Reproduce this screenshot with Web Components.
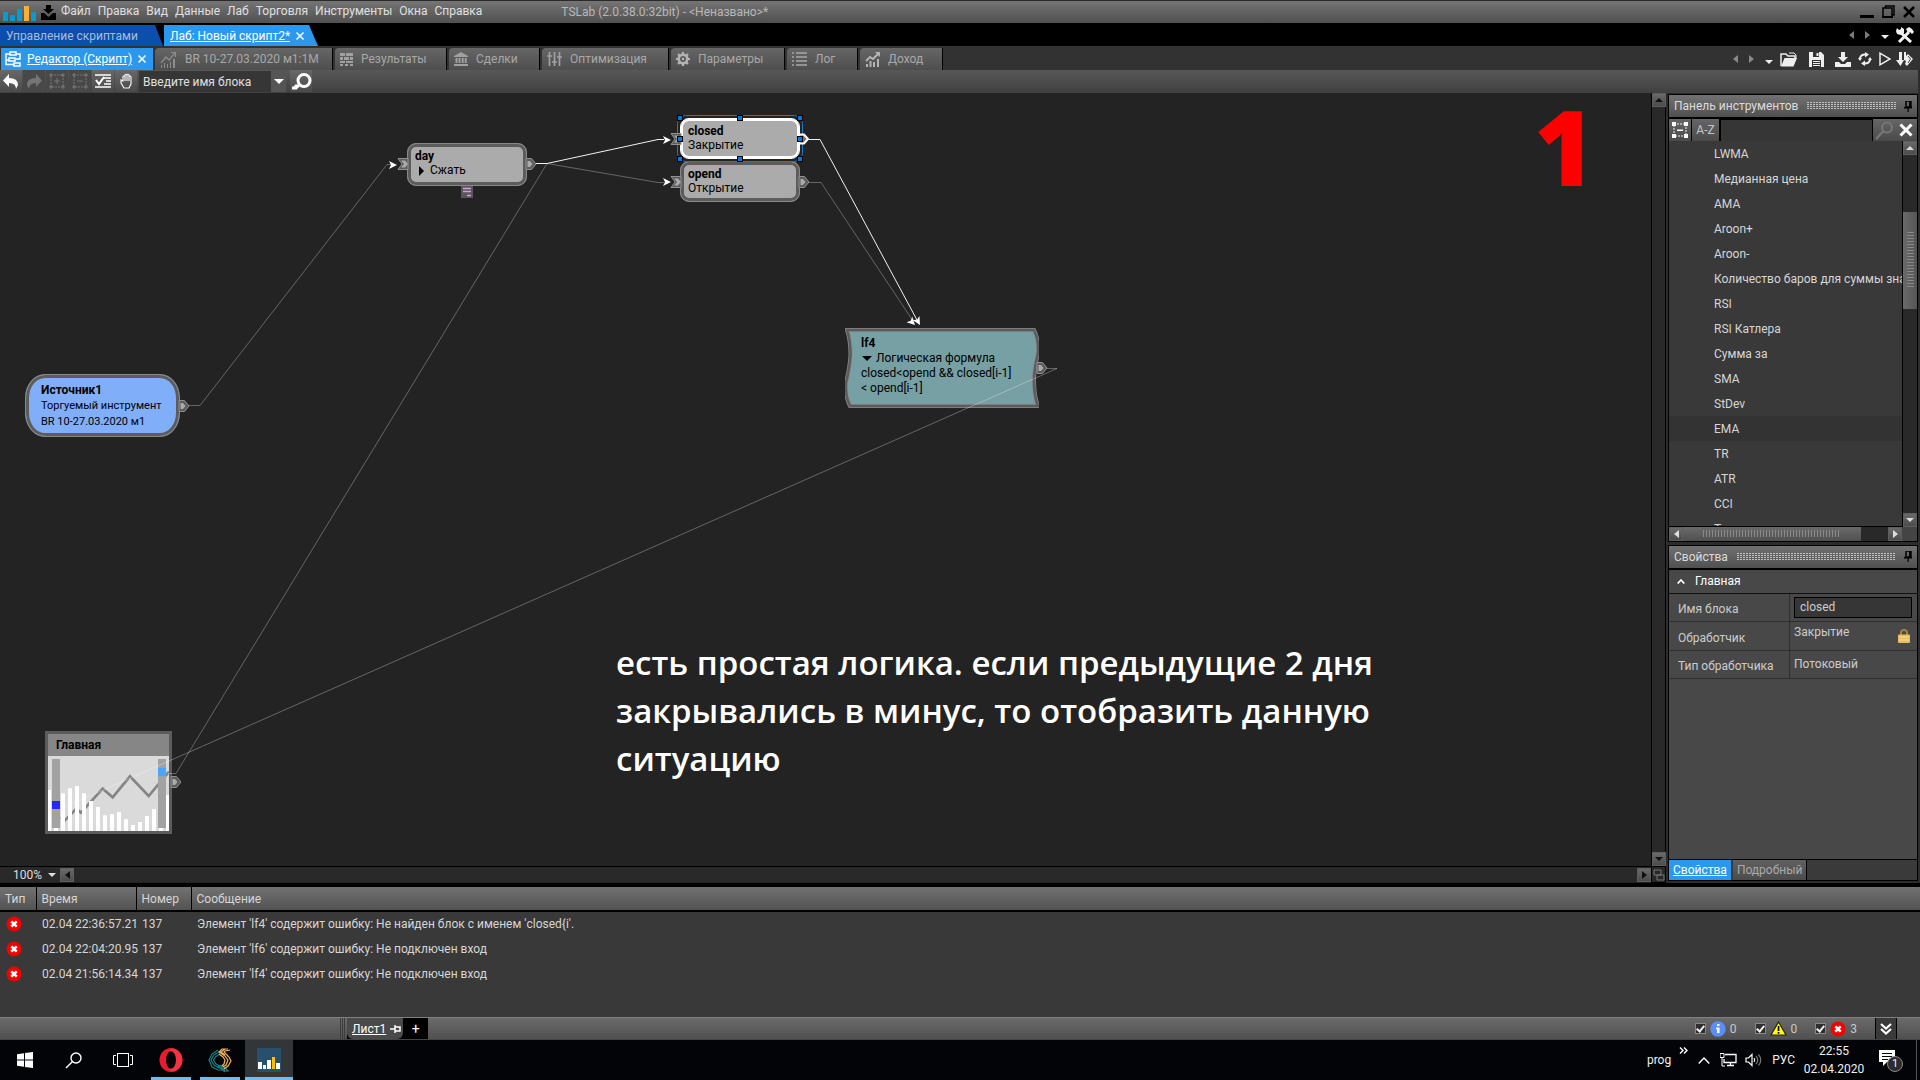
<!DOCTYPE html>
<html lang="ru">
<head>
<meta charset="utf-8">
<title>TSLab (2.0.38.0:32bit)</title>
<style>
html,body{margin:0;height:100%;background:#000;overflow:hidden}
body{font:12px/16px Roboto,"Open Sans",sans-serif;color:#d6d6d6}
</style>
</head>
<body>
<ts-app></ts-app>
<script>
const BASE = `
*{box-sizing:border-box}
button,input,select{font:inherit;color:inherit;background:none;border:0;margin:0;padding:0;border-radius:0;outline:0}
button{display:flex;align-items:center;white-space:nowrap}
`;
function define(name, css, html, setup) {
  const tpl = document.createElement('template');
  tpl.innerHTML = `<style>${BASE}${css}</style>${html}`;
  customElements.define(name, class extends HTMLElement {
    constructor() {
      super();
      this.attachShadow({mode: 'open'}).append(tpl.content.cloneNode(true));
    }
    connectedCallback() { if (setup) setup(this, this.shadowRoot); }
  });
}

/* name: [width, height, markup] */
const ICONS = {
  logo: [33, 19, '<g fill="#0a9ad0"><path d="M0 9h5v9H0zM7 12h5v6H7zM14 6h5v12h-5zM28 9h5v9h-5z"/></g><path fill="#fbb034" d="M21 3h5v15h-5z"/>'],
  inbox: [15, 15, '<path d="M5 0h5v4h3L7.500 9 2 4h3zM0 8h3l4.500 4L12 8h3v7H0z" fill="#000"/>'],
  min: [14, 14, '<path d="M0 10h14v3H0z" fill="#000"/>'],
  restore: [13, 14, '<path d="M3.500 3V1h8.500v9H10M1 3h9v9H1z" fill="none" stroke="#000" stroke-width="1.500"/><path d="M0 11h11v2H0z"/>'],
  close: [12, 12, '<path d="M1 1l10 10M11 1L1 11" stroke="#000" stroke-width="2.500"/>'],
  x: [8, 8, '<path d="M.5.5l7 7M7.500.5l-7 7" stroke="#e4f2ff" stroke-width="1.600"/>'],
  bigx: [14, 14, '<path d="M1.500 1.500l11 11M12.500 1.500l-11 11" stroke="#fff" stroke-width="3"/>'],
  left: [5, 8, '<path d="M5 0v8L0 4z" fill="currentColor"/>'],
  right: [5, 8, '<path d="M0 0v8l5-4z" fill="currentColor"/>'],
  down: [8, 4, '<path d="M0 0h8L4 4z" fill="currentColor"/>'],
  up: [8, 4, '<path d="M0 4h8L4 0z" fill="currentColor"/>'],
  bdown: [10, 5, '<path d="M0 0h10L5 5z" fill="currentColor"/>'],
  tools: [18, 16, '<path d="M4 5l11 10M13 5L3 15" stroke="#f2f2f2" stroke-width="3"/><path d="M0 4l1-3 2 2 2-1V0l3 2v4L5 8 1 7zM10 2l3-2 3 2 2 3-2 2-2-2-2 1z" fill="#f2f2f2"/>'],
  folder: [18, 15, '<path d="M1 14V2h5l2 2h7v3" fill="none" stroke="#eee" stroke-width="1.500"/><path d="M9 1h5l2 2v3" fill="none" stroke="#eee"/><path d="M1 14.500L4.500 6H17l-3.500 8.500z" fill="#eee"/>'],
  save: [15, 15, '<path d="M0 0h12l3 3v12H0z" fill="#eee"/><path d="M4 0h6v5H4zM3 8h9v7H3z" fill="#333"/><path d="M7.500 1h2v3h-2zM4 9h7v1H4zM4 11h7v1H4zM4 13h7v1H4z" fill="#eee"/>'],
  download: [16, 15, '<path d="M6 0h4v5h3l-5 5-5-5h3z" fill="#eee"/><path d="M0 10h4l2 2h4l2-2h4v5H0z" fill="#eee"/>'],
  refresh: [14, 14, '<path d="M2 8V6q1-3.500 5-3.500M12 6v2q-1 3.500-5 3.500" fill="none" stroke="#eee" stroke-width="2"/><path d="M7 0l4 2.500L7 5.500zM7 8.500v5.500l-4-2.500zM0 6h4L2 9zM10 8h4l-2-3z" fill="#eee"/>'],
  play: [12, 14, '<path d="M1 1.200v11.600L11 7z" fill="none" stroke="#eee" stroke-width="1.500"/>'],
  step: [17, 15, '<path d="M3 0h3v8h2l-3.500 6L0 8h3z" fill="#eee"/><path d="M8 0h2v4l2-2 5 5-6 7-2-2 1-3-2-1z" fill="#eee"/><path d="M12 4l2.500 3L12 11" stroke="#444" fill="none"/>'],
  flow: [16, 16, '<path d="M5 3H1v5M11 3h4v5h-4M4 9H1v4.500h8" fill="none" stroke="#fff" stroke-width="1.500"/><path d="M5 1h6v3H5zM4 7h6v3H4zM9 12h6v3H9z" fill="#2b96ea" stroke="#fff" stroke-width="1.500"/>'],
  chart: [17, 17, '<path d="M1 12l5-6 3 3 6-7M11 1.500h4.500V6" fill="none" stroke="#8d8d8d" stroke-width="1.200"/><path d="M1 14h1v3H1zM4 12h1v5H4zM7 13h1v4H7zM10 11h1v6h-1zM13 8h2v9h-2z" fill="#8d8d8d"/>'],
  results: [13, 13, '<g fill="#a0a0a0"><path d="M0 0h5v3H0zM6 0h7v3H6zM0 4h3v3H0zM4 4h5v3H4zM10 4h3v3h-3zM0 8h5v2H0zM6 8h7v2H6zM0 11h3v2H0zM5 11h3v2H5zM10 11h3v2h-3z"/></g>'],
  bank: [14, 14, '<path d="M7 0l7 4v1H0V4zM1.500 6h2v5h-2zM4.500 6h2v5h-2zM7.700 6h2v5h-2zM10.700 6h2v5h-2zM0 12h14v2H0z" fill="#a0a0a0"/>'],
  sliders: [15, 14, '<path d="M2.500 0v14M7.500 0v14M12.500 0v14M0 4h5M5 10h5M10 5h5" stroke="#a0a0a0" stroke-width="1.700"/>'],
  gear: [14, 14, '<circle cx="7" cy="7" r="4.300" fill="none" stroke="#b4b4b4" stroke-width="2.600"/><path d="M7 0v3M7 11v3M0 7h3M11 7h3M2 2l2 2M10 10l2 2M12 2l-2 2M4 10l-2 2" stroke="#b4b4b4" stroke-width="2.200"/><circle cx="7" cy="7" r="1.300" fill="#b4b4b4"/>'],
  list: [15, 14, '<path d="M0 1h2M0 5h2M0 9h2M0 13h2M4 1h11M4 5h11M4 9h11M4 13h11" stroke="#a8a8a8" stroke-width="1.700"/>'],
  income: [15, 15, '<path d="M1 9l4-4 3 2 5-5" fill="none" stroke="#b4b4b4" stroke-width="2"/><path d="M10 0h5v5zM1 12h2v3H1zM4.500 9h2v6h-2zM8 10h2v5H8zM12 7h2v8h-2z" fill="#b4b4b4"/>'],
  undo: [16, 15, '<path d="M6 0v4q9 0 9 7l-2 4q0-6-7-6v4L0 6.500z" fill="#fff"/>'],
  redo: [16, 15, '<path d="M10 0v4Q1 4 1 11l2 4q0-6 7-6v4l6-6.500z" fill="#757575"/>'],
  group: [16, 16, '<rect x="2" y="2" width="12" height="12" fill="none" stroke="#777" stroke-dasharray="2 1"/><path d="M5 8h6M8 5v6M0 2h4M2 0v4M12 2h4M14 0v4M0 14h4M2 12v4M12 14h4M14 12v4" stroke="#777"/>'],
  ungroup: [16, 16, '<rect x="2" y="2" width="12" height="12" fill="none" stroke="#777" stroke-dasharray="2 1"/><path d="M5 8h6M0 2h4M2 0v4M12 2h4M14 0v4M0 14h4M2 12v4M12 14h4M14 12v4" stroke="#777"/>'],
  checklist: [16, 14, '<path d="M0 1h16M9 4h7M11 7h5M9 10h7M0 13h16" stroke="#fff" stroke-width="1.300"/><path d="M1 6l3 4 5-7" fill="none" stroke="#fff" stroke-width="2"/>'],
  hand: [13, 16, '<path d="M4 15L1 10V7l2 1V3.500q1-1.500 2 0V2q1-1.500 2 0v0q1-1.500 2 0v1.500q1-1 2 .5V11l-2 4zM5 3.500V8M7 2v6M9 2.500V8" fill="none" stroke="#f4f4f4" stroke-width="1.200"/>'],
  lens: [21, 17, '<circle cx="13" cy="7.500" r="6" fill="none" stroke="#fff" stroke-width="3"/><path d="M9 11l-4 4H1M4 12l3 3" stroke="#fff" stroke-width="3" fill="none"/>'],
  frame: [16, 16, '<rect x="2" y="2" width="12" height="12" fill="none" stroke="#eee" stroke-dasharray="2 1"/><path d="M0 0h4v4H0zM12 0h4v4h-4zM0 12h4v4H0zM12 12h4v4h-4zM5 7.500h6v1.500H5z" fill="#fff"/>'],
  find: [19, 19, '<circle cx="12" cy="6.500" r="5" fill="none" stroke="#777" stroke-width="2"/><path d="M8.500 10L1 18" stroke="#777" stroke-width="2.500"/>'],
  pin: [8, 11, '<path d="M2 0h5v6H2z" fill="none" stroke="#000" stroke-width="1.500"/><path d="M0 6h8v1.500H0zM3.500 7h1.200v4H3.500zM5 0h2v6H5z"/>'],
  sidepin: [11, 8, '<path d="M0 4h5M5 0v8M5 2h5v4H5" fill="none" stroke="#fff" stroke-width="1.500"/>'],
  chev: [8, 5, '<path d="M.7 4.500L4 1l3.300 3.500" fill="none" stroke="#fff" stroke-width="1.700"/>'],
  lock: [12, 14, '<path d="M3 7V4q0-3 3-3t3 3v3" fill="none" stroke="#a8803a" stroke-width="2"/><rect y="5.500" width="12" height="8.500" rx="1" fill="#e8bf5c"/><path d="M1 8h10M1 11h10" stroke="#f8e29a"/>'],
  corner: [12, 12, '<path d="M1 1h7v5H1zM4 6h7v5H4z" fill="none" stroke="#777"/>'],
  error: [16, 16, '<circle cx="8" cy="8" r="7.500" fill="#f80000"/><path d="M5.300 5.300l5.400 5.400M10.700 5.300l-5.400 5.400" stroke="#fff" stroke-width="2.600"/>'],
  info: [16, 16, '<circle cx="8" cy="8" r="7.700" fill="#5a8ffb"/><path d="M7 3h2.500v2H7zM6 6.500h3.500V12H7V8H6z" fill="#fff"/>'],
  warn: [17, 15, '<path d="M8.500 1L16 14H1z" fill="#ff0" stroke="#222" stroke-width="1.200"/><path d="M7.700 5h1.700v5H7.700zM7.700 11h1.700v1.700H7.700z"/>'],
  dbldown: [12, 12, '<path d="M1 1l5 4.500L11 1M1 6l5 4.500L11 6" fill="none" stroke="#fff" stroke-width="2.200"/>'],
  win: [16, 16, '<path d="M0 2.300L7 1.300v6.200H0zM8 1.100L16 0v7.500H8zM0 8.500h7v6.200L0 13.700zM8 8.500h8V16l-8-1.100z" fill="#fff"/>'],
  search: [17, 17, '<circle cx="11" cy="6" r="5" fill="none" stroke="#fff" stroke-width="1.400"/><path d="M7.500 9.500L1 16" stroke="#fff" stroke-width="1.500"/>'],
  taskview: [20, 14, '<rect x="4.500" y=".5" width="11" height="13" fill="none" stroke="#fff"/><path d="M3 2.500H.5v9H3M17 2.500h2.500v9H17" fill="none" stroke="#fff"/>'],
  opera: [24, 24, '<path fill-rule="evenodd" d="M12 0a11.500 12 0 1 0 0 24a11.500 12 0 1 0 0-24zM12 3a5 9 0 1 1 0 18a5 9 0 1 1 0-18z" fill="#e81c2e"/><path d="M14 .2a11.500 12 0 0 1 0 23.600q-3-1-4-3 7 0 7-8.800T10 3q1-2 4-2.800z" fill="#ff4b55" opacity=".5"/>'],
  quik: [25, 25, '<g fill="none" stroke-width="1.200"><path d="M10 2L4 6 1 12l3 7 6 3h4M11 4L6 7l-3 5 3 5 5 3h3M12 6L8 8.500 5.500 12 8 16l4 2h2M12 17l5 6h4M14 17l6 6M10 18l7 6" stroke="#1c7f80"/><path d="M20 1l-6 0-3 3 6 4 3 4-2 5-3 2M22 2l-5 1-1 1 5 5 2 4-3 5-4 3M17 1l-4 3 4 3M11 6l4 3 2 3-1 4-2 2" stroke="#f3b45c"/></g>'],
  tslab: [24, 24, '<path d="M0 0h24v24H0z" fill="#27506d"/><path d="M1 14h4v7H1zM6 17h3v4H6zM10 12h4v9h-4zM19 15h4v6h-4z" fill="#fff"/><path d="M15 9h3v12h-3z" fill="#ffc000"/>'],
  raquo: [9, 7, '<path d="M1 .5L4 3.500 1 6.500M5 .5l3 3-3 3" fill="none" stroke="#fff" stroke-width="1.400"/>'],
  caret: [12, 7, '<path d="M.7 6.500L6 1l5.300 5.500" fill="none" stroke="#fff" stroke-width="1.400"/>'],
  net: [17, 14, '<path d="M5 1.500h11v8H4V6M7 12.500h7M10.500 10v2" fill="none" stroke="#fff" stroke-width="1.300"/><path d="M0 .5h4v4H0zM2 4v9h3" fill="none" stroke="#fff"/>'],
  sound: [17, 14, '<path d="M1 5h2.500L7 1.500v11L3.500 9H1z" fill="none" stroke="#fff" stroke-width="1.200"/><path d="M9 5q1.500 2 0 4" fill="none" stroke="#fff" stroke-width="1.200"/><path d="M11 3q3.500 4 0 8M13.500 1.500q4.500 5.500 0 11" fill="none" stroke="#777" stroke-width="1.200"/>'],
  notify: [17, 16, '<path d="M0 0h16v12h-8l-4 4v-4H0z" fill="#fff"/><path d="M3 3.500h10M3 6.500h10M3 9.500h6" stroke="#000"/>'],
  note: [12, 12, '<path d="M0 0h12v12H0z" fill="#5d5260"/><path d="M2 2.500h8M2 5.500h8M6 9.500h4" stroke="#c9a8d0" stroke-width="1.600"/>']
};
define('ts-icon', ':host{display:inline-flex;flex:none}svg{display:block}', '<svg aria-hidden="true"></svg>', (el, root) => {
  const [w, h, art] = ICONS[el.getAttribute('name')];
  const svg = root.querySelector('svg');
  svg.setAttribute('width', w);
  svg.setAttribute('height', h);
  svg.setAttribute('viewBox', `0 0 ${w} ${h}`);
  svg.innerHTML = art;
});

define('ts-titlebar', `
:host{display:flex;flex:none;box-sizing:border-box;align-items:center;height:23px;padding:0 5px 0 3px;border-top:1px solid #2a2a2a;background:linear-gradient(#757575,#505050)}
.brand{display:flex;align-items:center;gap:5px;margin-right:5px}
nav{display:flex;gap:7px;color:#e0e0e0;align-self:flex-start;line-height:20px}
h1{flex:1;margin:0;font:inherit;color:#b8b8b8;padding-left:79px}
.win{display:flex;align-items:center;gap:8px}`, `
<span class="brand"><ts-icon name="logo"></ts-icon><ts-icon name="inbox"></ts-icon></span>
<nav><button>Файл</button><button>Правка</button><button>Вид</button><button>Данные</button><button>Лаб</button><button>Торговля</button><button>Инструменты</button><button>Окна</button><button>Справка</button></nav>
<h1>TSLab (2.0.38.0:32bit) - &lt;Неназвано&gt;*</h1>
<span class="win"><button aria-label="Свернуть"><ts-icon name="min"></ts-icon></button><button aria-label="Восстановить"><ts-icon name="restore"></ts-icon></button><button aria-label="Закрыть"><ts-icon name="close"></ts-icon></button></span>`);

define('ts-doctabs', `
:host{display:flex;flex:none;box-sizing:border-box;align-items:flex-end;height:23px;background:#000;padding-right:6px}
.tab{height:21px;padding-left:6px;color:#a9bddb;background:#0b4eac;width:163px;clip-path:polygon(0 0,155px 0,100% 100%,0 100%)}
.on{background:#2b98ee;color:#fff;margin-left:1px;width:154px;gap:6px;clip-path:polygon(0 0,145px 0,100% 100%,0 100%)}
.on span{text-decoration:underline}
.r{margin-left:auto;display:flex;align-items:center;height:23px;gap:11px;color:#7a7a7a}
.r .d{color:#eee;margin-top:5px}.r button:last-child{margin-left:-4px}`, `
<button class="tab">Управление скриптами</button>
<button class="tab on"><span>Лаб: Новый скрипт2*</span><ts-icon name="x"></ts-icon></button>
<span class="r"><ts-icon name="left"></ts-icon><ts-icon name="right"></ts-icon><ts-icon class="d" name="down"></ts-icon><button aria-label="Настройки"><ts-icon name="tools"></ts-icon></button></span>`);

define('ts-viewtabs', `
:host{display:flex;flex:none;box-sizing:border-box;align-items:flex-end;height:24px;background:#323232;padding:0 7px 0 1px;gap:2px}
.tab{height:22px;padding:0 0 0 5px;gap:8px;color:#a8a8a8;background:linear-gradient(#666,#4e4e4e);border-right:1px solid #000;border-radius:4px 0 0 0}
.on{background:#2b98ee;color:#fff;border-color:#2b98ee;border-radius:0;padding-left:4px;gap:6px}
.on span{text-decoration:underline}
.r{margin-left:auto;display:flex;align-items:center;height:22px;gap:7px;color:#8a8a8a}
.r .d{color:#eee;margin-top:5px}.nav{display:flex;align-items:center;gap:11px}
.r>button:last-child{margin-left:-2px}`, `
<button class="tab on" style="width:152px"><ts-icon name="flow"></ts-icon><span>Редактор (Скрипт)</span><ts-icon name="x"></ts-icon></button>
<button class="tab" style="width:178px"><ts-icon name="chart"></ts-icon>BR 10-27.03.2020 м1:1М</button>
<button class="tab" style="width:112px"><ts-icon name="results"></ts-icon>Результаты</button>
<button class="tab" style="width:91px"><ts-icon name="bank"></ts-icon>Сделки</button>
<button class="tab" style="width:127px"><ts-icon name="sliders"></ts-icon>Оптимизация</button>
<button class="tab" style="width:114px"><ts-icon name="gear"></ts-icon>Параметры</button>
<button class="tab" style="width:71px"><ts-icon name="list"></ts-icon>Лог</button>
<button class="tab" style="width:83px"><ts-icon name="income"></ts-icon>Доход</button>
<span class="r"><span class="nav"><ts-icon name="left"></ts-icon><ts-icon name="right"></ts-icon><ts-icon class="d" name="down"></ts-icon></span>
<button aria-label="Открыть"><ts-icon name="folder"></ts-icon></button><button aria-label="Сохранить" style="padding:0 4px"><ts-icon name="save"></ts-icon></button><button aria-label="Загрузить"><ts-icon name="download"></ts-icon></button><button aria-label="Обновить"><ts-icon name="refresh"></ts-icon></button><button aria-label="Запуск"><ts-icon name="play"></ts-icon></button><button aria-label="Шаг"><ts-icon name="step"></ts-icon></button></span>`);

define('ts-toolbar', `
:host{display:flex;flex:none;box-sizing:border-box;height:23px;background:linear-gradient(#585858,#404040);border-right:2px solid #2c2c2c}
button{width:22px;height:22px;justify-content:center;margin-right:1px;background:linear-gradient(#686868,#4a4a4a)}
button.off{background:#484848}
.combo{display:flex;align-items:center;margin:1px 4px 1px 1px;width:147px;height:21px;background:#363636}
select{appearance:none;flex:1;height:21px;padding-left:4px;color:#e0e0e0}
.combo i{display:flex;width:15px;height:21px;align-items:center;justify-content:center;background:#555;color:#fff}`, `
<button aria-label="Отменить"><ts-icon name="undo"></ts-icon></button><button class="off" aria-label="Повторить"><ts-icon name="redo"></ts-icon></button><button class="off" aria-label="Сгруппировать"><ts-icon name="group"></ts-icon></button><button class="off" aria-label="Разгруппировать"><ts-icon name="ungroup"></ts-icon></button><button aria-label="Проверить"><ts-icon name="checklist"></ts-icon></button><button aria-label="Рука"><ts-icon name="hand"></ts-icon></button>
<span class="combo"><select aria-label="Имя блока"><option>Введите имя блока</option></select><i><ts-icon name="bdown"></ts-icon></i></span>
<button aria-label="Найти"><ts-icon name="lens"></ts-icon></button>`);

define('ts-node', `
:host{display:block;box-sizing:border-box;position:absolute;color:#000;line-height:14px;border:1px solid #888;background:#ababab;box-shadow:inset 0 0 0 3px #5c5c5c;border-radius:9px;padding:5px 7px}
:host([kind=source]){background:#81aef8;border-radius:20px/24px;padding:7px 15px;font-size:11px;line-height:16px}
:host([selected]){border-color:#fff;box-shadow:inset 0 0 0 2px #fff}
:host([kind=formula]){background:none;border:0;box-shadow:none;border-radius:0;padding:8px 16px;line-height:15px}
svg{display:none;position:absolute;inset:0;width:100%;height:100%}
:host([kind=formula]) svg{display:block}
.body{position:relative}
b{display:block;font-size:12px;font-weight:700}
::slotted(*){display:block;white-space:nowrap}`, `
<svg viewBox="0 0 193 80" preserveAspectRatio="none"><path d="M2 2H188Q193 12 192 25Q188 42 188 52Q188 68 192 78H5Q0 68 1 55Q5 38 5.500 27Q5.500 12 2 2z" fill="#76a0a4" stroke="#888" stroke-width="4"/><path d="M2 2H188Q193 12 192 25Q188 42 188 52Q188 68 192 78H5Q0 68 1 55Q5 38 5.500 27Q5.500 12 2 2z" fill="none" stroke="#5c5c5c" stroke-width="2.500"/></svg>
<div class="body"><b></b><slot></slot></div>`, (el, root) => { root.querySelector('b').textContent = el.getAttribute('label'); });

define('ts-chart-node', `
:host{display:flex;box-sizing:border-box;flex-direction:column;position:absolute;border:3px solid #5c5c5c;background:#dadada;color:#000}
h2{margin:0;font-size:12px;font-weight:700;line-height:22px;padding-left:8px;background:#868686}
svg{display:block;flex:1;width:100%;min-height:0}`, `
<h2>Главная</h2>
<svg viewBox="144 138 363 225" preserveAspectRatio="none"><path d="M183 322l12 9 33-34 15 11 65-72 30 26 52-63 56 59 61-73" fill="none" stroke="#858585" stroke-width="8"/>
<path fill="#fff" d="M144 240h9v125h-9zM162 354h12v9h-12zM183 250h12v115h-12zM204 235h12v130h-12zM225 228h12v137h-12zM246 250h12v115h-12zM267 273h12v92h-12zM288 291h12v74h-12zM309 316h12v49h-12zM330 312h12v53h-12zM351 306h12v59h-12zM372 328h12v37h-12zM393 345h12v20h-12zM414 336h12v29h-12zM435 318h12v47h-12zM456 297h12v68h-12zM477 354h12v11h-12zM498 255h9v110h-9z"/>
<path fill="#a2a2a2" d="M156 147h24v207h-24zM474 147h24v207h-24z"/><path fill="#2828f0" d="M156 273h24v24h-24z"/><path fill="#4ba4ff" d="M474 174h24v24h-24z"/></svg>`);

define('ts-canvas', `
:host{display:block;position:relative;overflow:hidden;background:#232323}
.edges{position:absolute;left:0;top:0;width:100%;height:100%}
.note{position:absolute;left:616px;top:546px;width:790px;margin:0;font:600 33px/48px "Open Sans",sans-serif;color:#fff;white-space:pre-line}
.one{position:absolute;right:56px;top:2px;margin:0;font:800 104px/102px "Open Sans",sans-serif;color:#f00}
.in{padding-left:15px;position:relative}
.in::before{content:"";position:absolute;left:4px;top:3px;border:5px solid transparent;border-left:5px solid #000;border-right:0}
.in.d::before{left:1px;top:5px;border:5px solid transparent;border-top:5px solid #000;border-bottom:0}`, `
<ts-node label="Источник1" kind="source" style="left:25px;top:281px;width:155px;height:63px"><span>Торгуемый инструмент</span><span>BR 10-27.03.2020 м1</span></ts-node>
<ts-node label="day" style="left:407px;top:50px;width:120px;height:43px"><span class="in">Сжать</span></ts-node>
<ts-node label="closed" selected style="left:680px;top:25px;width:120px;height:41px"><span>Закрытие</span></ts-node>
<ts-node label="opend" style="left:680px;top:68px;width:120px;height:41px"><span>Открытие</span></ts-node>
<ts-node label="lf4" kind="formula" style="left:845px;top:235px;width:194px;height:80px"><span class="in d">Логическая формула</span><span>closed&lt;opend &amp;&amp; closed[i-1]</span><span>&lt; opend[i-1]</span></ts-node>
<ts-chart-node style="left:45px;top:638px;width:127px;height:103px"></ts-chart-node>
<svg class="edges"><defs>
<g id="out"><path d="M0-5.500h5.500l4.500 5.500-4.500 5.500H0z" fill="#5c5c5c" stroke="#909090"/><path d="M1.500-3h2.500l2.500 3L4 3H1.500z" fill="#ababab"/></g>
<g id="inp"><path d="M0-5.500h10v11H0l4-5.500z" fill="#5c5c5c" stroke="#909090"/><path d="M3-3.500h4l3 3.500-3 3.500H3L6 0z" fill="#ababab"/></g>
<path id="arr" d="M-8-4L0 0l-8 4 2-4z" fill="#fff"/>
<rect id="h" x="-2.500" y="-2.500" width="5" height="5" fill="#0a78d6" stroke="#000"/></defs>
<g transform="translate(0 -93)"><g fill="none" stroke="#fff" stroke-opacity=".3">
<path d="M188 405.500h12L387 164.500h4M547 163.500L658 182.500h6M547 163.500L176 773.500h-8M809 182.500h12L911 318M1046 368.500h11L65 807"/></g>
<path d="M536 163.500h11L658 139.500h6M809 139.500h11L917 320" fill="none" stroke="#f2f2f2"/>
<rect x="677.500" y="115.500" width="125" height="46" rx="8" fill="none" stroke="#1f78c4"/>
<use href="#inp" x="398" y="164"/><use href="#inp" x="671" y="139"/><use href="#inp" x="671" y="182"/>
<use href="#out" x="526" y="164"/><use href="#out" x="799" y="182"/><use href="#out" x="179" y="406"/><use href="#out" x="1037" y="368"/><use href="#out" x="171" y="782"/>
<path d="M800 134.500h4l4 4.500-4 4.500h-4" fill="#777" stroke="#fff" stroke-width="2"/>
<use href="#arr" x="397" y="165"/><use href="#arr" x="671" y="140"/><use href="#arr" x="671" y="182"/>
<use href="#arr" transform="translate(915 325) rotate(45)"/><use href="#arr" transform="translate(920 325) rotate(60)"/>
<use href="#h" x="680" y="118"/><use href="#h" x="740" y="118"/><use href="#h" x="800" y="118"/><use href="#h" x="680" y="139"/><use href="#h" x="800" y="139"/><use href="#h" x="680" y="159"/><use href="#h" x="740" y="159"/><use href="#h" x="800" y="159"/></g></svg>
<ts-icon name="note" style="position:absolute;left:461px;top:93px"></ts-icon>
<p class="note">есть простая логика. если предыдущие 2 дня
закрывались в минус, то отобразить данную
ситуацию</p>
<p class="one">1</p>`);

define('ts-scroll', `
:host{display:flex;flex-direction:column;background:#292929;color:#111}
:host([dir=h]){flex-direction:row}
:host([bright]){color:#ddd}
button{flex:none;width:14px;height:14px;justify-content:center;background:linear-gradient(#6a6a6a,#4c4c4c);border:1px solid #5e5e5e}
.a{flex:var(--before,0) 1 0}.c{flex:var(--after,1) 1 0}
.t{flex:var(--thumb,0) 1 0;display:flex;align-items:center;justify-content:center;background:linear-gradient(90deg,#6a6a6a,#555);overflow:hidden}
:host([dir=h]) .t{background:linear-gradient(#6a6a6a,#505050)}
.t i{width:7px;height:58%;background:repeating-linear-gradient(#8a8a8a 0 1px,transparent 1px 3px)}
:host([dir=h]) .t i{width:77%;height:7px;background:repeating-linear-gradient(90deg,#8a8a8a 0 1px,transparent 1px 3px)}`, `
<button tabindex="-1" aria-label="Назад"></button><span class="a"></span><span class="t"><i></i></span><span class="c"></span><button tabindex="-1" aria-label="Вперёд"></button>`, (el, root) => {
  const names = el.getAttribute('dir') === 'h' ? ['left', 'right'] : ['up', 'down'];
  root.querySelectorAll('button').forEach((b, i) => { b.innerHTML = `<ts-icon name="${names[i]}"></ts-icon>`; });
});

define('ts-editor', `
:host{display:grid;box-sizing:border-box;grid-template:minmax(0,1fr) 17px/minmax(0,1fr) 14px;border-right:1px solid #000;background:#292929}
.v{border-left:1px solid #000;width:13px}
.zoom{display:flex;border-top:1px solid #000;border-bottom:1px solid #222;align-items:center}
.zoom button{padding-left:13px;gap:6px;width:60px;color:#ddd}
.zoom ts-scroll{flex:1}
.k{display:flex;align-items:center;justify-content:center;border:1px solid #000;border-width:1px 0 1px 1px}`, `
<ts-canvas></ts-canvas><ts-scroll class="v"></ts-scroll>
<div class="zoom"><button>100%<ts-icon name="down"></ts-icon></button><ts-scroll dir="h"></ts-scroll></div>
<span class="k"><ts-icon name="corner"></ts-icon></span>`);

define('ts-panel', `
:host{display:flex;box-sizing:border-box;flex-direction:column;min-height:0;border:1px solid #000;background:#484848}
header{display:flex;align-items:center;flex:none;height:24px;padding:0 5px;gap:8px;border-bottom:2px solid #000;background:linear-gradient(#727272,#505050);color:#dcdcdc}
h2{margin:0;font:inherit}
i{flex:1;height:8px;background:conic-gradient(#c0c0c0 90deg,transparent 0) 0 0/3px 2px}`, `
<header><h2></h2><i></i><ts-icon name="pin"></ts-icon></header><slot></slot>`, (el, root) => { root.querySelector('h2').textContent = el.getAttribute('label'); });

define('ts-blocklist', `
:host{display:flex;flex-direction:column;flex:1;min-height:0;background:#393939}
.find{display:flex;flex:none;height:22px;background:#000}
.find button{justify-content:center;width:22px;background:linear-gradient(#666,#4a4a4a)}
.find .az{width:27px;margin:0 1px;color:#c4c4c4}
input{flex:1;min-width:0;background:#363636;border:1px solid #000;border-bottom:0;padding:0 4px}
.mid{display:flex;flex:1;min-height:0}
ul{flex:1;min-width:0;margin:0;padding:0;list-style:none;overflow:hidden;border-bottom:1px solid #000;border-right:1px solid #000}
li{height:25px;line-height:26px;padding-left:45px;white-space:nowrap;overflow:hidden}
li.hover{background:#333}
.v{--before:57;--thumb:97;--after:204}
.bot{display:flex;flex:none}
.h{flex:1;--thumb:177;--after:27}.bot span{width:15px;background:#444}`, `
<div class="find"><button aria-label="Группы"><ts-icon name="frame"></ts-icon></button><button class="az">A-Z</button><input aria-label="Поиск"><button aria-label="Найти"><ts-icon name="find"></ts-icon></button><button aria-label="Очистить"><ts-icon name="bigx"></ts-icon></button></div>
<div class="mid"><ul><li>LWMA</li><li>Медианная цена</li><li>AMA</li><li>Aroon+</li><li>Aroon-</li><li>Количество баров для суммы зна</li><li>RSI</li><li>RSI Катлера</li><li>Сумма за</li><li>SMA</li><li>StDev</li><li class="hover">EMA</li><li>TR</li><li>ATR</li><li>CCI</li><li>Т</li></ul><ts-scroll bright class="v"></ts-scroll></div>
<div class="bot"><ts-scroll bright dir="h" class="h"></ts-scroll><span></span></div>`);

define('ts-props', `
:host{display:flex;flex-direction:column;flex:1;min-height:0;color:#ccc}
.g{flex:none;height:24px;padding-left:8px;gap:10px;color:#fff;border-bottom:1px solid #111}
.row{display:flex;flex:none;border-bottom:1px solid #2e2e2e;height:28px}
.row>label,.row>span:first-child{width:121px;padding:4px 0 0 9px;display:flex;align-items:center;border-right:1px solid #2e2e2e}
.row>div{flex:1;display:flex;align-items:center;padding:0 5px 0 4px}
input{width:100%;height:21px;border:1px solid #000;background:#363636;padding:0 5px}
.hd{height:29px}.hd>div{align-items:flex-start;justify-content:space-between;padding-top:2px;padding-right:7px}.hd ts-icon{margin-top:5px}
.tabs{display:flex;flex:none;margin-top:auto;height:21px;background:#3a3a3a;border-top:1px solid #000}
.tabs button{height:20px;padding:0 4px;color:#aaa;background:linear-gradient(#606060,#4c4c4c);border-right:1px solid #000}
.tabs .on{background:#2b98ee;color:#fff;text-decoration:underline;margin-right:2px;border:0}`, `
<button class="g"><ts-icon name="chev"></ts-icon>Главная</button>
<div class="row"><label for="n">Имя блока</label><div><input id="n" value="closed"></div></div>
<div class="row hd"><span>Обработчик</span><div>Закрытие<ts-icon name="lock"></ts-icon></div></div>
<div class="row"><span>Тип обработчика</span><div>Потоковый</div></div>
<div class="tabs"><button class="on">Свойства</button><button>Подробный</button></div>`);

define('ts-log', `
:host{display:block;flex:none;box-sizing:border-box;min-height:134px;border-top:4px solid #000;background:#393939}
table{width:100%;border-collapse:collapse;table-layout:fixed}
th{font-weight:400;text-align:left;height:24px;padding:0 0 0 5px;border-right:1px solid #000;border-bottom:2px solid #000;background:linear-gradient(#727272,#525252)}
th:last-child{border-right:0}
td{height:25px;padding:0 0 0 6px;white-space:nowrap}td:first-child{padding-left:6px}ts-icon{vertical-align:middle}`, `
<table><colgroup><col style="width:36px"><col style="width:100px"><col style="width:55px"><col></colgroup>
<thead><tr><th>Тип</th><th>Время</th><th>Номер</th><th>Сообщение</th></tr></thead>
<tbody><tr><td><ts-icon name="error"></ts-icon></td><td>02.04 22:36:57.21</td><td>137</td><td>Элемент 'lf4' содержит ошибку: Не найден блок с именем 'closed{i'.</td></tr>
<tr><td><ts-icon name="error"></ts-icon></td><td>02.04 22:04:20.95</td><td>137</td><td>Элемент 'lf6' содержит ошибку: Не подключен вход</td></tr>
<tr><td><ts-icon name="error"></ts-icon></td><td>02.04 21:56:14.34</td><td>137</td><td>Элемент 'lf4' содержит ошибку: Не подключен вход</td></tr></tbody></table>`);

define('ts-sheetbar', `
:host{display:flex;flex:none;box-sizing:border-box;height:23px;border-top:1px solid #808080;border-bottom:1px solid #444;background:linear-gradient(#6a6a6a,#505050)}
.grip{width:6px;margin:0 1px 0 340px;background:repeating-linear-gradient(90deg,#3c3c3c 0 1px,transparent 1px 2px)}
.bg{display:flex;background:#000}
.sheet{gap:4px;padding:0 2px 0 5px;background:#4a4a4a;color:#fff;border-radius:0 0 6px 6px}
.sheet span{text-decoration:underline}
.add{width:25px;justify-content:center;color:#fff;font-size:14px}
.f{margin-left:auto;display:flex;align-items:center;gap:18px;padding-right:18px;color:#c8c8c8}
label{display:flex;align-items:center;gap:4px}
input{appearance:none;width:11px;height:11px;border:1px solid #888;background:#2e2e2e;position:relative}
input:checked::before{content:"";position:absolute;left:2px;top:0;width:3px;height:6px;border:solid #eee;border-width:0 2px 2px 0;transform:rotate(40deg)}
.more{width:22px;justify-content:center;background:#3a3a3a;border:1px solid #000;border-width:0 1px;margin-right:23px}`, `
<span class="grip"></span><span class="bg"><button class="sheet"><span>Лист1</span><ts-icon name="sidepin"></ts-icon></button><button class="add">+</button></span>
<span class="f"><label><input type="checkbox" checked><ts-icon name="info"></ts-icon>0</label><label><input type="checkbox" checked><ts-icon name="warn"></ts-icon>0</label><label><input type="checkbox" checked><ts-icon name="error"></ts-icon>3</label></span>
<button class="more" aria-label="Свернуть журнал"><ts-icon name="dbldown"></ts-icon></button>`);

define('ts-taskbar', `
:host{display:flex;flex:none;box-sizing:border-box;height:40px;background:#020407;color:#f0f0f0;padding-right:3px}
.b{width:49px;justify-content:center;border-bottom:3px solid transparent;padding-top:3px}
.run{width:40px;margin:0 5px 0 4px;border-color:#76b9ed}
.act{background:#333639;width:48px;border-color:#76b9ed}
.tray{margin-left:auto;display:flex;align-items:center}
.clock{display:flex;flex-direction:column;align-items:center;width:66px;line-height:18px}
.n{position:relative;padding-bottom:4px}
.n b{position:absolute;left:8px;top:6px;width:16px;height:16px;border:1px solid #888;border-radius:50%;background:#2c2c30;font-size:11px;line-height:14px;font-weight:400;text-align:center}
.end{width:1px;height:40px;background:#555;margin-left:20px}`, `
<button class="b" aria-label="Пуск"><ts-icon name="win"></ts-icon></button><button class="b" aria-label="Поиск"><ts-icon name="search"></ts-icon></button><button class="b" aria-label="Представление задач"><ts-icon name="taskview"></ts-icon></button>
<button class="b run" aria-label="Opera"><ts-icon name="opera"></ts-icon></button><button class="b run" aria-label="QUIK"><ts-icon name="quik"></ts-icon></button><button class="b act" aria-label="TSLab"><ts-icon name="tslab"></ts-icon></button>
<span class="tray"><span>prog</span><ts-icon name="raquo" style="margin:0 10px 20px 8px"></ts-icon><ts-icon name="caret" style="margin-right:10px"></ts-icon><ts-icon name="net" style="margin-right:8px"></ts-icon><ts-icon name="sound" style="margin-right:10px"></ts-icon><span>РУС</span>
<span class="clock" style="margin:0 12px 0 6px"><span>22:55</span><span>02.04.2020</span></span><button class="n" aria-label="Уведомления"><ts-icon name="notify"></ts-icon><b>1</b></button><i class="end"></i></span>`);

define('ts-app', `
:host{display:flex;flex-direction:column;height:100vh;background:#000}
main{display:flex;flex:1 1 0;min-height:0;background:#2c2c2c}
ts-editor{flex:1;min-width:0}
aside{display:flex;flex-direction:column;gap:3px;flex:none;width:250px;margin:1px 2px 2px 2px}
.p1{flex:448 1 0}.p2{flex:336 1 0}`, `
<ts-titlebar></ts-titlebar><ts-doctabs></ts-doctabs><ts-viewtabs></ts-viewtabs><ts-toolbar></ts-toolbar>
<main><ts-editor></ts-editor><aside><ts-panel class="p1" label="Панель инструментов"><ts-blocklist></ts-blocklist></ts-panel><ts-panel class="p2" label="Свойства"><ts-props></ts-props></ts-panel></aside></main>
<ts-log></ts-log><ts-sheetbar></ts-sheetbar><ts-taskbar></ts-taskbar>`);
</script>
</body>
</html>
